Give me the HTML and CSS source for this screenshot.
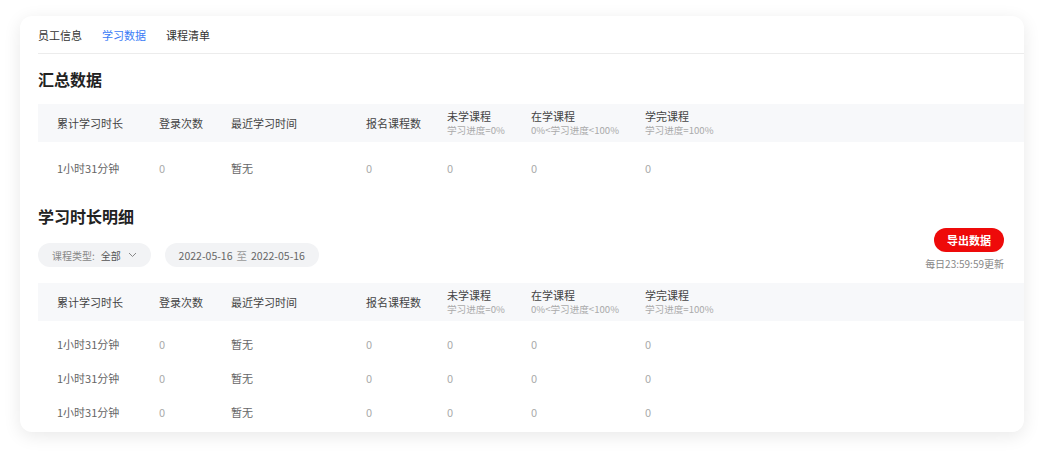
FILE: index.html
```html
<!DOCTYPE html>
<html lang="zh-CN">
<head>
    <meta charset="UTF-8">
    <meta name="viewport" content="width=device-width, initial-scale=1.0">
    <title>学习数据</title>
    <link rel="stylesheet" href="styles.css">
</head>
<body>
    <div class="panel">
        <!-- Tabs -->
        <div class="tabs">
            <span class="tab">员工信息</span>
            <span class="tab active">学习数据</span>
            <span class="tab">课程清单</span>
        </div>

        <h2 class="section-title">汇总数据</h2>
        <div class="table">
            <div class="row head">
                <div>累计学习时长</div>
                <div>登录次数</div>
                <div>最近学习时间</div>
                <div>报名课程数</div>
                <div>未学课程<small>学习进度=0%</small></div>
                <div>在学课程<small>0%&lt;学习进度&lt;100%</small></div>
                <div>学完课程<small>学习进度=100%</small></div>
            </div>
            <div class="body first">
                <div class="row">
                    <div class="dark">1小时31分钟</div>
                    <div>0</div>
                    <div class="dark">暂无</div>
                    <div>0</div>
                    <div>0</div>
                    <div>0</div>
                    <div>0</div>
                </div>
            </div>
        </div>

        <h2 class="section-title second">学习时长明细</h2>
        <div class="toolbar">
            <div class="filters">
                <div class="pill">
                    <span class="label">课程类型:</span>
                    <span class="value">全部</span>
                    <svg width="9" height="6" viewBox="0 0 9 6"><path d="M1 1l3.5 3.5L8 1" fill="none" stroke="#888" stroke-width="1"/></svg>
                </div>
                <div class="pill date">2022-05-16 <span class="to">至</span> 2022-05-16</div>
            </div>
            <div class="export">
                <button class="btn-export">导出数据</button>
                <span class="note">每日23:59:59更新</span>
            </div>
        </div>

        <div class="table">
            <div class="row head">
                <div>累计学习时长</div>
                <div>登录次数</div>
                <div>最近学习时间</div>
                <div>报名课程数</div>
                <div>未学课程<small>学习进度=0%</small></div>
                <div>在学课程<small>0%&lt;学习进度&lt;100%</small></div>
                <div>学完课程<small>学习进度=100%</small></div>
            </div>
            <div class="body">
                <div class="row">
                    <div class="dark">1小时31分钟</div>
                    <div>0</div>
                    <div class="dark">暂无</div>
                    <div>0</div>
                    <div>0</div>
                    <div>0</div>
                    <div>0</div>
                </div>
                <div class="row">
                    <div class="dark">1小时31分钟</div>
                    <div>0</div>
                    <div class="dark">暂无</div>
                    <div>0</div>
                    <div>0</div>
                    <div>0</div>
                    <div>0</div>
                </div>
                <div class="row">
                    <div class="dark">1小时31分钟</div>
                    <div>0</div>
                    <div class="dark">暂无</div>
                    <div>0</div>
                    <div>0</div>
                    <div>0</div>
                    <div>0</div>
                </div>
            </div>
        </div>
    </div>
</body>
</html>
```

FILE: styles.css
```css
body {
    margin: 0;
    padding: 16px 20px 24px 20px;
    background: #fff;
    font-family: "Noto Sans CJK SC", "Noto Sans", sans-serif;
    color: #333;
}

.panel {
    height: 416px;
    background: #fff;
    border-radius: 12px;
    box-shadow: 0 4px 18px rgba(0, 0, 0, 0.09);
    padding-left: 18px;
    overflow: hidden;
    box-sizing: border-box;
}

.tabs {
    display: flex;
    gap: 20px;
    padding: 11px 0 10px 0;
    border-bottom: 1px solid #ececec;
    font-size: 11px;
    line-height: 16px;
}

.tab {
    color: #333;
}

.tab.active {
    color: #3a7bf6;
}

.section-title {
    margin: 14px 0 14px 0;
    font-size: 16px;
    line-height: 22px;
    font-weight: bold;
    color: #222;
}

.section-title.second {
    margin: 20px 0 1px 0;
}

.table .row {
    display: grid;
    grid-template-columns: 102px 72px 135px 81px 84px 114px 1fr;
    padding-left: 19px;
    align-items: center;
    height: 34px;
    font-size: 11px;
    color: #aaa;
}

.table .row .dark {
    color: #666;
}

.table .head {
    height: 38px;
    background: #f7f8fa;
    color: #444;
    line-height: 15px;
}

.table .head small {
    display: block;
    font-size: 9.6px;
    line-height: 13px;
    color: #aaa;
}

.table .body {
    padding-top: 6px;
}

.table .body.first {
    padding-top: 9px;
}

.toolbar {
    display: flex;
    justify-content: space-between;
    align-items: flex-end;
    padding-right: 20px;
    margin-bottom: 12px;
}

.filters {
    display: flex;
    gap: 14px;
    margin-bottom: 4px;
}

.pill {
    height: 24px;
    border-radius: 12px;
    background: #f2f3f5;
    display: flex;
    align-items: center;
    gap: 6px;
    padding: 0 14px;
    font-size: 10px;
    color: #555;
    box-sizing: border-box;
}

.pill .label {
    color: #888;
}

.pill svg {
    margin-left: 1px;
}

.pill.date {
    width: 154px;
    justify-content: center;
    padding: 0;
    gap: 4px;
    font-size: 10.5px;
    color: #666;
}

.pill.date .to {
    color: #999;
}

.export {
    display: flex;
    flex-direction: column;
    align-items: flex-end;
    gap: 5px;
}

.btn-export {
    width: 70px;
    height: 24px;
    border: none;
    border-radius: 12px;
    background: #ee0a0a;
    color: #fff;
    font-family: inherit;
    font-size: 11px;
    font-weight: bold;
    padding: 0;
}

.note {
    font-size: 10px;
    line-height: 14px;
    color: #888;
}
```
